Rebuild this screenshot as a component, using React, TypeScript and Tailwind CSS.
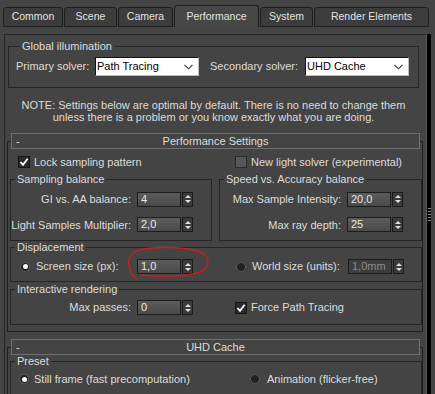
import React from "react";

const tabs = [
  { label: "Common", cls: "w-[60px] h-[20px] bg-[#3c3c3c] border-b" },
  { label: "Scene", cls: "w-[53px] h-[20px] bg-[#3c3c3c] border-b" },
  { label: "Camera", cls: "w-[55px] h-[20px] bg-[#3c3c3c] border-b" },
  { label: "Performance", cls: "w-[85px] h-[22px] bg-[#474747] border-b-0" },
  { label: "System", cls: "w-[53px] h-[20px] bg-[#3c3c3c] border-b" },
  { label: "Render Elements", cls: "w-[115px] h-[20px] bg-[#3c3c3c] border-b" },
];

const Spinner: React.FC<{ value: string; disabled?: boolean }> = ({ value, disabled }) => (
  <div className="flex h-[15px] gap-[1px]">
    <div
      className={
        disabled
          ? "w-[44px] h-full border border-[#1c1c1c] bg-[#3d3d3d] text-[#8c8c8c] pl-[3px] leading-[13px]"
          : "w-[44px] h-full border border-[#1c1c1c] bg-gradient-to-b from-[#5c5c5c] to-[#4a4a4a] text-[#e8e8e8] pl-[3px] leading-[13px]"
      }
    >
      {value}
    </div>
    <div className="w-[11px] h-full border border-[#1c1c1c] bg-[#3b3b3b] flex flex-col items-center justify-center gap-[2px]">
      <div className="w-0 h-0 border-x-[3px] border-x-transparent border-b-[3px] border-b-[#e0e0e0]" />
      <div className="w-0 h-0 border-x-[3px] border-x-transparent border-t-[3px] border-t-[#e0e0e0]" />
    </div>
  </div>
);

const Checkbox: React.FC<{ checked?: boolean }> = ({ checked }) =>
  checked ? (
    <div className="w-[12px] h-[12px] border border-[#151515] bg-[#2c2c2c] flex items-center justify-center">
      <svg width="10" height="10" viewBox="0 0 10 10">
        <path d="M1.5 5 L4 7.8 L8.6 1.8" fill="none" stroke="#ffffff" strokeWidth="1.8" />
      </svg>
    </div>
  ) : (
    <div className="w-[12px] h-[12px] border border-[#2a2a2a] bg-[#575757]" />
  );

const Radio: React.FC<{ on?: boolean }> = ({ on }) => (
  <div className="w-[10px] h-[10px] rounded-full bg-[#222] border border-[#5a5a5a] flex items-center justify-center">
    {on && <div className="w-[5px] h-[5px] rounded-full bg-white" />}
  </div>
);

const Dropdown: React.FC<{ value: string }> = ({ value }) => (
  <div className="w-[104px] h-[19px] bg-white border border-[#111] border-r-[#bdbdbd] border-b-[#bdbdbd] flex items-center justify-between pl-[1px] pr-[5px] text-black">
    <span>{value}</span>
    <svg width="9" height="6" viewBox="0 0 9 6">
      <polyline points="0.5,0.8 4.5,4.8 8.5,0.8" fill="none" stroke="#333" strokeWidth="1.1" />
    </svg>
  </div>
);

const GroupBox: React.FC<{ title: string; className: string; children: React.ReactNode }> = ({
  title,
  className,
  children,
}) => (
  <fieldset className={`border border-[#252525] ${className}`}>
    <legend className="ml-[4px] px-[2px] leading-[13px]">{title}</legend>
    {children}
  </fieldset>
);

const RolloutHeader: React.FC<{ title: string }> = ({ title }) => (
  <div className="-mt-[9px] ml-[3px] w-[409px] h-[16px] border border-[#707070] bg-[#444] flex items-center">
    <span className="w-[14px] pl-[4px]">-</span>
    <span className="flex-1 text-center pr-[14px]">{title}</span>
  </div>
);

export default function App() {
  return (
    <div className="relative w-[435px] h-[394px] overflow-hidden bg-[#444] text-[#dcdcdc] text-[11px] font-['Liberation_Sans',Arial,sans-serif]">
      {/* Tabs */}
      <div className="flex items-end gap-[1px] pl-[3px] pt-[5px] h-[27px]">
        {tabs.map((t) => (
          <div
            key={t.label}
            className={`${t.cls} border-t border-x border-[#1e1e1e] rounded-t-[3px] flex items-center justify-center text-[10.5px] text-[#e2e2e2]`}
          >
            {t.label}
          </div>
        ))}
      </div>

      <div className="flex mt-[7px] ml-[4px] h-[360px]">
        <div className="w-[422px] border-t border-l border-[#262626]">
          {/* Global illumination */}
          <GroupBox title="Global illumination" className="mt-[5px] ml-[3px] w-[411px] pl-[7px] pt-[4px] pb-[11px]">
            <div className="flex items-center h-[19px]">
              <span className="w-[79px]">Primary solver:</span>
              <Dropdown value="Path Tracing" />
              <span className="ml-[11px] w-[95px]">Secondary solver:</span>
              <Dropdown value="UHD Cache" />
            </div>
          </GroupBox>

          <div className="mt-[11px] ml-[3px] w-[411px] text-center leading-[12px]">
            NOTE: Settings below are optimal by default. There is no need to change them
            <br />
            unless there is a problem or you know exactly what you are doing.
          </div>

          {/* Performance Settings rollout */}
          <div className="mt-[18px] ml-[2px] w-[416px] border-x border-t border-b border-[#1f1f1f] pb-[6px]">
            <RolloutHeader title="Performance Settings" />

            <div className="mt-[6px] h-[14px] pl-[10px] flex items-center">
              <div className="w-[217px] flex items-center">
                <Checkbox checked />
                <span className="ml-[4px]">Lock sampling pattern</span>
              </div>
              <Checkbox />
              <span className="ml-[4px]">New light solver (experimental)</span>
            </div>

            <div className="mt-[4px] ml-[2px] flex gap-[7px]">
              <GroupBox title="Sampling balance" className="w-[202px] pt-[5px] pb-[7px]">
                <div className="flex flex-col gap-[9px]">
                  <div className="flex items-center">
                    <span className="w-[120px] text-right">GI vs. AA balance:</span>
                    <div className="ml-[6px]">
                      <Spinner value="4" />
                    </div>
                  </div>
                  <div className="flex items-center">
                    <span className="w-[120px] text-right">Light Samples Multiplier:</span>
                    <div className="ml-[6px]">
                      <Spinner value="2,0" />
                    </div>
                  </div>
                </div>
              </GroupBox>
              <GroupBox title="Speed vs. Accuracy balance" className="w-[203px] pt-[5px] pb-[7px]">
                <div className="flex flex-col gap-[9px]">
                  <div className="flex items-center">
                    <span className="w-[121px] text-right">Max Sample Intensity:</span>
                    <div className="ml-[6px]">
                      <Spinner value="20,0" />
                    </div>
                  </div>
                  <div className="flex items-center">
                    <span className="w-[121px] text-right">Max ray depth:</span>
                    <div className="ml-[6px]">
                      <Spinner value="25" />
                    </div>
                  </div>
                </div>
              </GroupBox>
            </div>

            <GroupBox title="Displacement" className="ml-[2px] w-[412px] pt-[5px] pb-[7px]">
              <div className="flex items-center h-[15px]">
                <div className="ml-[9px]">
                  <Radio on />
                </div>
                <span className="ml-[6px] w-[101px]">Screen size (px):</span>
                <Spinner value="1,0" />
                <div className="ml-[43px]">
                  <Radio />
                </div>
                <span className="ml-[6px] w-[96px]">World size (units):</span>
                <Spinner value="1,0mm" disabled />
              </div>
            </GroupBox>

            <GroupBox title="Interactive rendering" className="mt-[1px] ml-[2px] w-[412px] pt-[4px] pb-[9px]">
              <div className="flex items-center h-[15px]">
                <span className="w-[120px] text-right">Max passes:</span>
                <div className="ml-[6px]">
                  <Spinner value="0" />
                </div>
                <div className="ml-[42px]">
                  <Checkbox checked />
                </div>
                <span className="ml-[4px]">Force Path Tracing</span>
              </div>
            </GroupBox>
          </div>

          {/* UHD Cache rollout */}
          <div className="mt-[15px] ml-[2px] w-[416px] border-x border-t border-[#1f1f1f] pb-[20px]">
            <RolloutHeader title="UHD Cache" />
            <GroupBox title="Preset" className="ml-[2px] w-[412px] pt-[4px] pb-[10px]">
              <div className="flex items-center h-[14px]">
                <div className="ml-[8px] w-[231px] flex items-center">
                  <Radio on />
                  <span className="ml-[5px]">Still frame (fast precomputation)</span>
                </div>
                <Radio />
                <span className="ml-[7px]">Animation (flicker-free)</span>
              </div>
            </GroupBox>
          </div>
        </div>

        {/* Scrollbar */}
        <div className="w-[5px] border-l border-[#5a5a5a] bg-black flex flex-col items-center justify-center gap-[2px]">
          <div className="w-[3px] h-[1px] bg-[#8a8a8a]" />
          <div className="w-[3px] h-[1px] bg-[#8a8a8a]" />
          <div className="w-[3px] h-[1px] bg-[#8a8a8a]" />
          <div className="w-[3px] h-[1px] bg-[#8a8a8a]" />
          <div className="w-[3px] h-[1px] bg-[#8a8a8a]" />
        </div>
      </div>

      {/* Hand-drawn red annotation */}
      <svg className="absolute left-0 top-0 pointer-events-none" width="435" height="394" viewBox="0 0 435 394">
        <path
          d="M137 279 C129 273 125 259 133 253 C144 246 180 246 198 251 C211 255 211 267 200 272 C188 277 160 277 141 275"
          fill="none"
          stroke="#c4201c"
          strokeWidth="1.4"
          strokeLinecap="round"
        />
      </svg>
    </div>
  );
}
